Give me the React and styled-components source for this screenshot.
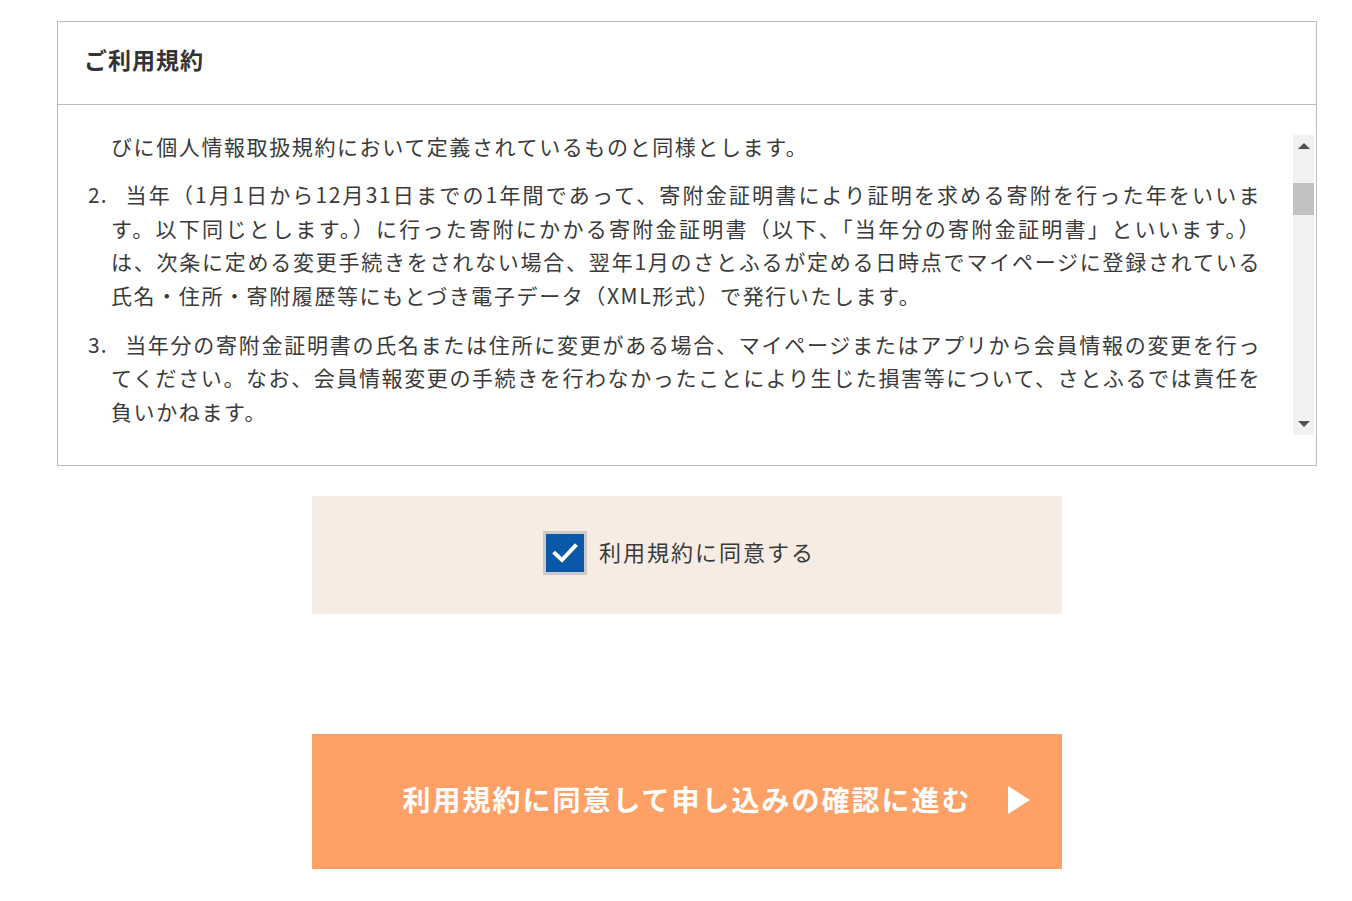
import styled, { createGlobalStyle } from "styled-components";

const GlobalStyle = createGlobalStyle`
  html, body {
    margin: 0;
    padding: 0;
    background: #fff;
  }
  body {
    font-family: "Noto Sans CJK JP", "Noto Sans", sans-serif;
    color: #333;
  }
`;

const Page = styled.div`
  width: 1260px;
  margin-left: 57px;
  padding-top: 21px;
  padding-bottom: 32px;
`;

const TermsBox = styled.section`
  border: 1px solid #bdbdbd;
  background: #fff;
`;

const TermsHeader = styled.header`
  height: 82px;
  display: flex;
  align-items: center;
  padding-left: 26px;
  border-bottom: 1px solid #bdbdbd;
`;

const Title = styled.h2`
  margin: 0 0 8px;
  font-size: 23px;
  font-weight: 700;
  color: #333;
  letter-spacing: 1px;
`;

const TermsBody = styled.div`
  display: flex;
  padding: 30px 2px 30px 30px;
`;

const Viewport = styled.div`
  flex: 1;
  height: 300px;
  overflow: hidden;
  padding-right: 32px;
`;

const Item = styled.div`
  padding-left: 23px;
  margin-top: ${(p) => p.$gap || "15.5px"};
  font-size: 21px;
  line-height: ${(p) => p.$lead || "33.5px"};
  letter-spacing: 1.6px;
  color: #3a3a3a;
`;

const Line = styled.span`
  display: block;
  white-space: nowrap;
  text-align: justify;
  text-align-last: ${(p) => (p.$fill ? "justify" : "left")};
  margin-left: ${(p) => (p.$first ? "-23px" : "0")};
`;

const Marker = styled.span`
  display: inline-block;
  width: 37px;
  letter-spacing: 1px;
`;

const Scrollbar = styled.div`
  width: 21px;
  height: 300px;
  display: flex;
  flex-direction: column;
  background: #f1f1f1;
`;

const ScrollButton = styled.div`
  height: 22px;
  display: flex;
  align-items: center;
  justify-content: center;
  &::before {
    content: "";
    border-left: 6px solid transparent;
    border-right: 6px solid transparent;
    ${(p) =>
      p.$down
        ? "border-top: 6px solid #505050;"
        : "border-bottom: 6px solid #505050;"}
  }
`;

const Track = styled.div`
  flex: 1;
  padding-top: ${(p) => p.$pos}px;
`;

const Thumb = styled.div`
  height: 32px;
  background: #c1c1c1;
`;

const AgreePanel = styled.div`
  width: 750px;
  height: 118px;
  margin: 30px auto 0;
  background: #f7ece4;
  display: flex;
  align-items: center;
  justify-content: center;
  padding-bottom: 4px;
  box-sizing: border-box;
`;

const CheckLabel = styled.label`
  display: flex;
  align-items: center;
  gap: 12px;
  cursor: pointer;
  font-size: 22px;
  color: #3a3a3a;
  letter-spacing: 2px;
  margin-right: 16px;
`;

const LabelText = styled.span`
  margin-top: -5px;
`;

const CheckBox = styled.span`
  width: 38px;
  height: 38px;
  border: 3px solid #cacaca;
  background: #0a58a8;
  display: flex;
  align-items: center;
  justify-content: center;
`;

const SubmitButton = styled.button`
  position: relative;
  display: flex;
  align-items: center;
  justify-content: center;
  width: 750px;
  height: 135px;
  margin: 120px auto 0;
  border: 0;
  background: #ffa066;
  color: #fff;
  font-family: "Noto Sans CJK JP", "Noto Sans", sans-serif;
  font-size: 28px;
  font-weight: 700;
  letter-spacing: 2px;
  cursor: pointer;
  padding: 0 0 6px;
`;

const Arrow = styled.span`
  position: absolute;
  right: 32px;
  top: 52px;
  width: 0;
  height: 0;
  border-top: 14px solid transparent;
  border-bottom: 14px solid transparent;
  border-left: 22px solid #fff;
`;

export default function App() {
  return (
    <>
      <GlobalStyle />
      <Page>
        <TermsBox>
          <TermsHeader>
            <Title>ご利用規約</Title>
          </TermsHeader>
          <TermsBody>
            <Viewport>
              <Item $gap="0" $lead="22px">
                <Line>びに個人情報取扱規約において定義されているものと同様とします。</Line>
              </Item>
              <Item $gap="21px">
                <Line $first $fill>
                  <Marker>2.</Marker>当年（1月1日から12月31日までの1年間であって、寄附金証明書により証明を求める寄附を行った年をいいま
                </Line>
                <Line $fill>す。以下同じとします。）に行った寄附にかかる寄附金証明書（以下、「当年分の寄附金証明書」といいます。）</Line>
                <Line $fill>は、次条に定める変更手続きをされない場合、翌年1月のさとふるが定める日時点でマイページに登録されている</Line>
                <Line>氏名・住所・寄附履歴等にもとづき電子データ（XML形式）で発行いたします。</Line>
              </Item>
              <Item>
                <Line $first $fill>
                  <Marker>3.</Marker>当年分の寄附金証明書の氏名または住所に変更がある場合、マイページまたはアプリから会員情報の変更を行っ
                </Line>
                <Line $fill>てください。なお、会員情報変更の手続きを行わなかったことにより生じた損害等について、さとふるでは責任を</Line>
                <Line>負いかねます。</Line>
              </Item>
            </Viewport>
            <Scrollbar>
              <ScrollButton />
              <Track $pos={26}>
                <Thumb />
              </Track>
              <ScrollButton $down />
            </Scrollbar>
          </TermsBody>
        </TermsBox>

        <AgreePanel>
          <CheckLabel>
            <CheckBox>
              <svg width="26" height="22" viewBox="0 0 26 22">
                <path
                  d="M3 11.5 L10 18 L23 4"
                  fill="none"
                  stroke="#fff"
                  strokeWidth="4"
                  strokeLinecap="square"
                />
              </svg>
            </CheckBox>
            <LabelText>利用規約に同意する</LabelText>
          </CheckLabel>
        </AgreePanel>

        <SubmitButton>
          利用規約に同意して申し込みの確認に進む
          <Arrow />
        </SubmitButton>
      </Page>
    </>
  );
}
